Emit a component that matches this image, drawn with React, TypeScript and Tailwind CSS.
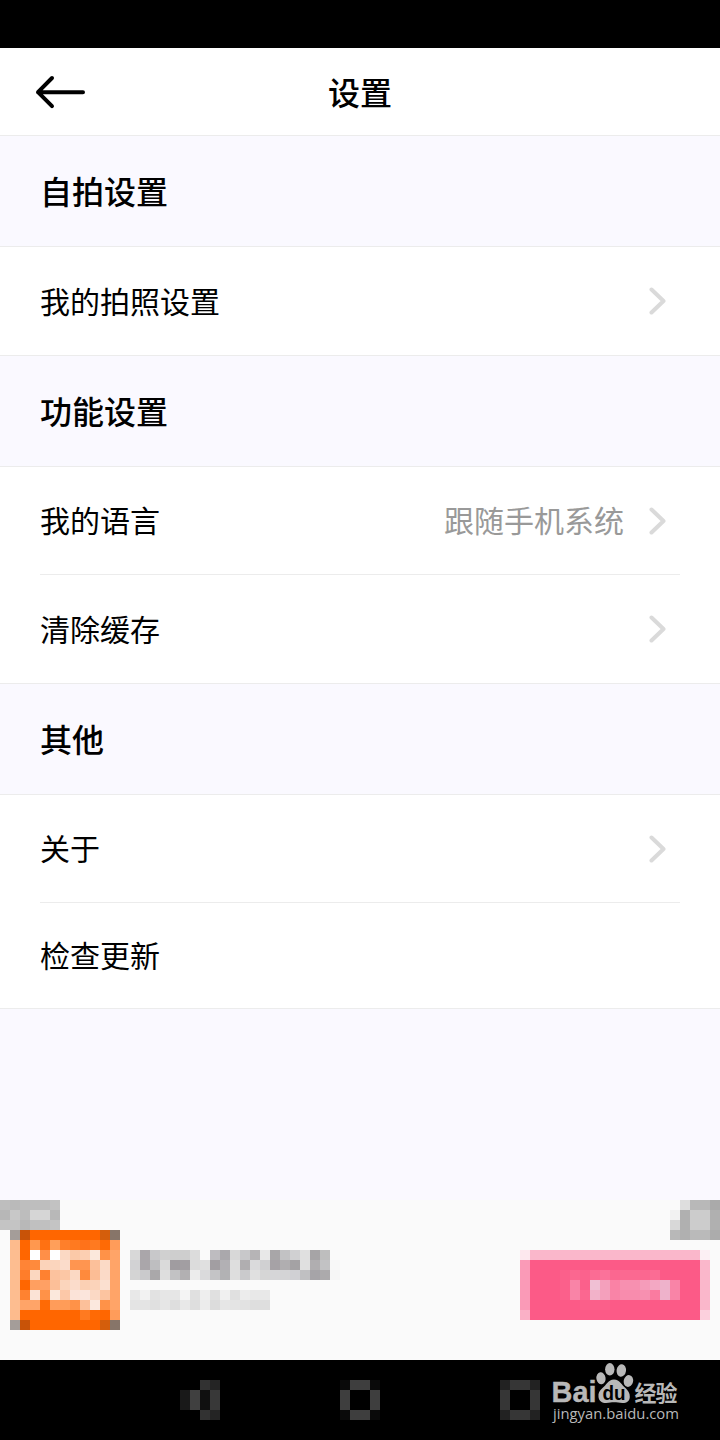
import React from 'react';

interface Item {
  label: string;
  value?: string;
  arrow?: boolean;
}

interface Group {
  title: string;
  items: Item[];
}

const groups: Group[] = [
  { title: '自拍设置', items: [{ label: '我的拍照设置', arrow: true }] },
  {
    title: '功能设置',
    items: [
      { label: '我的语言', value: '跟随手机系统', arrow: true },
      { label: '清除缓存', arrow: true },
    ],
  },
  {
    title: '其他',
    items: [{ label: '关于', arrow: true }, { label: '检查更新' }],
  },
];

// Each row is a list of hex colours, one per 10px block; "-" leaves a block empty
const adTag = [
  'bebebe bababa bebebe bebebe bebebe c2c2c2',
  'b7b7b7 c8c8c8 bdbdbd d6d6d6 d6d6d6 b8b8b8',
  'c4c4c4 c4c4c4 b8b8b8 c0c0c0 c0c0c0 c4c4c4',
];

const adClose = [
  '- dedede b8b8b8 b8b8b8 aaaaaa',
  'f2f2f2 b0b0b0 cccccc cccccc b0b0b0',
  'd8d8d8 b0b0b0 cccccc cccccc b0b0b0',
  'b8b8b8 b0b0b0 bababa bababa acacac',
];

const adIcon = [
  'a49d99 c85308 ff6600 ff6600 ff6600 ff6600 ff6600 ff6600 ff6600 d45e0c 877569',
  'fdbb8d ff6600 ff984f ff7112 ff9f5a ff7f2a ff7a20 ff721a ff7a20 ff6a05 ff9c5a',
  'fdbd90 ff6600 ffffff ff8f48 ffffff fbd9c4 fbc9a8 fccfb2 fbe8dc ff9248 ffa468',
  'fdbd90 ff8436 ff8a3c fbd3ba fbd5bd fbdccb ff9550 ff9550 fcc09a fbdac6 ffa468',
  'fdbd90 ff7d2a fbd7c0 ff8130 fcc29e fcc7a5 fbd9c4 ff8a3c fcbd95 fbdac8 ffa468',
  'fdbd90 ff6600 ff9f60 ffa064 fcbf98 fbd5bc fbdccb fbd0b4 fbd3ba fbe0d0 ffa468',
  'fdbd90 ff8230 fbe3d6 ff9248 fbe8dc fcc8a8 fbe3d8 fbe5dc fbd9c5 fcc4a0 ffa468',
  'fdbd90 ffa468 ffa468 ff6a05 ff9c5a ff9c58 ff9248 fcc09a fbe8de ff9248 ffa468',
  'fdbb8d ff6600 ff6600 ff6600 ff6600 ff6600 ff6600 ff7a20 ff6a05 ff6600 ff9c5a',
  'a49d99 c85308 ff6600 ff6600 ff6600 ff6600 ff6600 ff6600 ff6600 d45e0c 877569',
];

const adTitle = [
  'd8d8d8 aaa6aa c8c8ca d0d0d0 cecece cecece dcdcdc - bebcc0 aaa8ac d8d8d8 c8c8ca b6b4b6 e8e8e8 a8a6a8 c2c2c4 d0d0d2 e0e0e0 a6a4a6 bebebe -',
  'd2d2d4 aaa6aa bebec0 dadada a09ca0 a29ea2 dcdcdc e0e0e0 a29ea2 b2b0b4 dedede b0aeb0 dadadc d0d0d2 a6a2a6 b0aeb0 a4a2a4 e0e0e0 b0aeb0 c2c2c4 f8f8f8',
  'd4d4d4 cacacc aaa8aa dedede c2c2c4 b2b0b2 ececec dadadc c4c4c6 b2b2b4 dedede cacacc e0e0e0 d6d6d6 d6d6d8 d4d4d6 d0d0d4 c0c0c2 a6a4a8 acaaac f6f6f6',
];

const adDesc = [
  'e8e8e8 f2f2f2 e2e2e2 e6e6e6 e6e6e6 f4f4f4 e0e0e0 eeeeee e0e0e0 f0f0f0 e0e0e0 ececec e8e8e8 e8e8e8',
  'e4e4e4 e4e4e4 e0e0e0 e6e6e6 dedede e8e8e8 dedede ececec dcdcdc e6e6e6 e4e4e4 e2e2e2 dedede dedede',
];

const adButton = [
  'fde8ee fab7cb fab7cb fab7cb fab7cb fab7cb fab7cb fab7cb fab7cb fab7cb fab7cb fab7cb fab7cb fab7cb fab7cb fab7cb fab7cb fab7cb fcf0f4',
  'fa9ab7 fc5a87 fc5a87 fc5a87 fc5a87 fc5a87 fc5a87 fc5a87 fc5a87 fc5a87 fc5a87 fc5a87 fc5a87 fc5a87 fc5a87 fc5a87 fc5a87 fc5a87 fab7cb',
  'fa9ab7 fc5a87 fc5a87 fc5a87 fb608b fb6790 fb628d fb6c94 fb729a fb6790 fb6991 fb6991 fb6790 fb6c94 fc5a87 fc5a87 fc5a87 fc5a87 fab7cb',
  'fa9ab7 fc5a87 fc5a87 fc5a87 fb608b f984a7 fb608b f0c0d4 f4a0bc fa82a5 f790b0 f790b0 f59cba f3a8c3 eeb2cb f984a7 fc5a87 fc5a87 fab7cb',
  'fa9ab7 fc5a87 fc5a87 fc5a87 fb608b f984a7 fb6790 f2b2c9 f4a0bc f984a7 f88cad f88cad f790b0 fa7ba0 eeb2cb f984a7 fc5a87 fc5a87 fab7cb',
  'fa9ab7 fc5a87 fc5a87 fc5a87 fc5a87 fc5a87 fb5f8a fb5f8a fb5f8a fc5a87 fc5a87 fc5a87 fc5a87 fc5a87 fc5a87 fc5a87 fc5a87 fc5a87 fab7cb',
  'fab0c6 fc5a87 fc5a87 fc5a87 fc5a87 fc5a87 fc5a87 fc5a87 fc5a87 fc5a87 fc5a87 fc5a87 fc5a87 fc5a87 fc5a87 fc5a87 fc5a87 fc5a87 fcd0dd',
];

const navBack = [
  '- - 323232 242424',
  '191919 404040 101010 383838',
  '191919 404040 101010 383838',
  '- - 323232 242424',
];

const navHome = [
  '0a0a0a 3e3e3e 3e3e3e 0a0a0a',
  '3e3e3e - - 3e3e3e',
  '3e3e3e - - 3e3e3e',
  '0a0a0a 3e3e3e 3e3e3e 0a0a0a',
];

const navRecent = [
  '222222 363636 363636 222222',
  '363636 - - 363636',
  '363636 - - 363636',
  '222222 363636 363636 222222',
];

const Mosaic: React.FC<{ rows: string[] }> = ({ rows }) => {
  const cells = rows.map(row => row.split(' '));
  const width = cells[0].length * 10;
  const height = cells.length * 10;

  return (
    <svg
      className="block shrink-0"
      width={width}
      height={height}
      viewBox={`0 0 ${width} ${height}`}
      shapeRendering="crispEdges"
      aria-hidden="true"
    >
      {cells.map((row, y) =>
        row.map((color, x) =>
          color === '-' ? null : (
            <rect key={`${x}-${y}`} x={x * 10} y={y * 10} width="10" height="10" fill={`#${color}`} />
          )
        )
      )}
    </svg>
  );
};

const Header: React.FC = () => (
  <header className="grid h-[88px] grid-cols-3 items-center border-b border-[#ececec] bg-white">
    <button className="pl-[35px]" aria-label="返回">
      <svg width="52" height="36" viewBox="0 0 52 36" fill="none" stroke="#000" strokeWidth="4" strokeLinecap="round" strokeLinejoin="round">
        <path d="M17 4 3 18.2 17 32.2M3 18.2H48" />
      </svg>
    </button>
    <h1 className="pb-0.5 text-center text-[32px] leading-10 font-medium">设置</h1>
  </header>
);

const SettingRow: React.FC<{ item: Item }> = ({ item }) => (
  <li className="mx-10 flex h-[108px] items-center border-b border-[#ececec] pr-3.5 text-[30px] leading-10 last:h-auto last:flex-1 last:border-b-0">
    <span className="pb-[3px]">{item.label}</span>
    {item.value && <span className="ml-auto pb-[3px] text-[#999999]">{item.value}</span>}
    {item.arrow && (
      <svg
        className={item.value ? 'ml-[25px]' : 'ml-auto'}
        width="17"
        height="28"
        viewBox="0 0 17 28"
        fill="none"
        stroke="#dadada"
        strokeWidth="4"
        strokeLinecap="round"
        strokeLinejoin="round"
      >
        <path d="M2.5 2.5 14.5 14 2.5 25.5" />
      </svg>
    )}
  </li>
);

const Watermark: React.FC = () => (
  <svg className="absolute top-0 right-0" width="180" height="80" viewBox="540 1360 180 80" fill="#b8b8b8">
    <text x="551.5" y="1402" fontSize="29" fontWeight="700" textLength="45" lengthAdjust="spacingAndGlyphs" fontFamily="Liberation Sans, sans-serif" stroke="#b8b8b8" strokeWidth="0.4">Bai</text>
    <ellipse cx="601" cy="1378.3" rx="4.6" ry="6" transform="rotate(-8 601 1378.3)" />
    <ellipse cx="609.8" cy="1369.3" rx="4.7" ry="6.2" />
    <ellipse cx="621.3" cy="1370.5" rx="4.7" ry="6.2" transform="rotate(8 621.3 1370.5)" />
    <ellipse cx="628.4" cy="1381" rx="4.7" ry="6" transform="rotate(12 628.4 1381)" />
    <path d="M614 1379.500C608 1379.500 606.500 1385 602.500 1388C599.500 1390.500 598 1393 598.500 1397C599 1401 602 1403 606 1403C610 1403 611 1402.300 614 1402.300C617 1402.300 619 1403 622.500 1403C627 1403 629.500 1401 629.800 1397C630 1393 628 1390.500 625.500 1388C621.500 1385 620 1379.500 614 1379.500Z" />
    <text x="602.5" y="1399.5" fontSize="20" fontWeight="700" fill="#000" textLength="23" lengthAdjust="spacingAndGlyphs" fontFamily="Liberation Sans, sans-serif">du</text>
    <text x="634.5" y="1400.5" fontSize="22" fontWeight="700" textLength="43" fontFamily="Noto Sans CJK SC, sans-serif">经验</text>
    <text x="553" y="1419" fontSize="15" fontWeight="500" textLength="126" lengthAdjust="spacingAndGlyphs" fontFamily="Open Sans, sans-serif">jingyan.baidu.com</text>
  </svg>
);

const App: React.FC = () => {
  return (
    <div className="flex h-[1440px] w-[720px] flex-col overflow-hidden bg-[#faf9ff] font-['Noto_Sans_CJK_SC',sans-serif] text-black">
      <div className="h-12 shrink-0 bg-black" />
      <Header />

      <main className="flex-1">
        {groups.map((group, index) => (
          <section key={group.title}>
            <h2 className="flex h-[111px] items-center border-b border-[#ececec] pb-[3px] pl-10 text-[32px] leading-10 font-medium">
              {group.title}
            </h2>
            <ul
              className={`flex flex-col border-b border-[#ececec] bg-white ${
                index === 0 ? 'h-[109px]' : index === 1 ? 'h-[217px]' : 'h-[214px]'
              }`}
            >
              {group.items.map(item => (
                <SettingRow key={item.label} item={item} />
              ))}
            </ul>
          </section>
        ))}
      </main>

      {/* Ad banner */}
      <aside className="flex h-40 shrink-0 justify-between bg-[#fafafa]">
        <div>
          <Mosaic rows={adTag} />
          <div className="flex gap-2.5 pl-2.5">
            <Mosaic rows={adIcon} />
            <div className="flex flex-col gap-2.5 pt-5">
              <Mosaic rows={adTitle} />
              <Mosaic rows={adDesc} />
            </div>
          </div>
        </div>
        <div className="flex flex-col items-end gap-2.5">
          <Mosaic rows={adClose} />
          <div className="pr-2.5">
            <Mosaic rows={adButton} />
          </div>
        </div>
      </aside>

      <nav className="relative flex h-20 shrink-0 items-center gap-[120px] bg-black pl-[180px]">
        <Mosaic rows={navBack} />
        <Mosaic rows={navHome} />
        <Mosaic rows={navRecent} />
        <Watermark />
      </nav>
    </div>
  );
};

export default App;
